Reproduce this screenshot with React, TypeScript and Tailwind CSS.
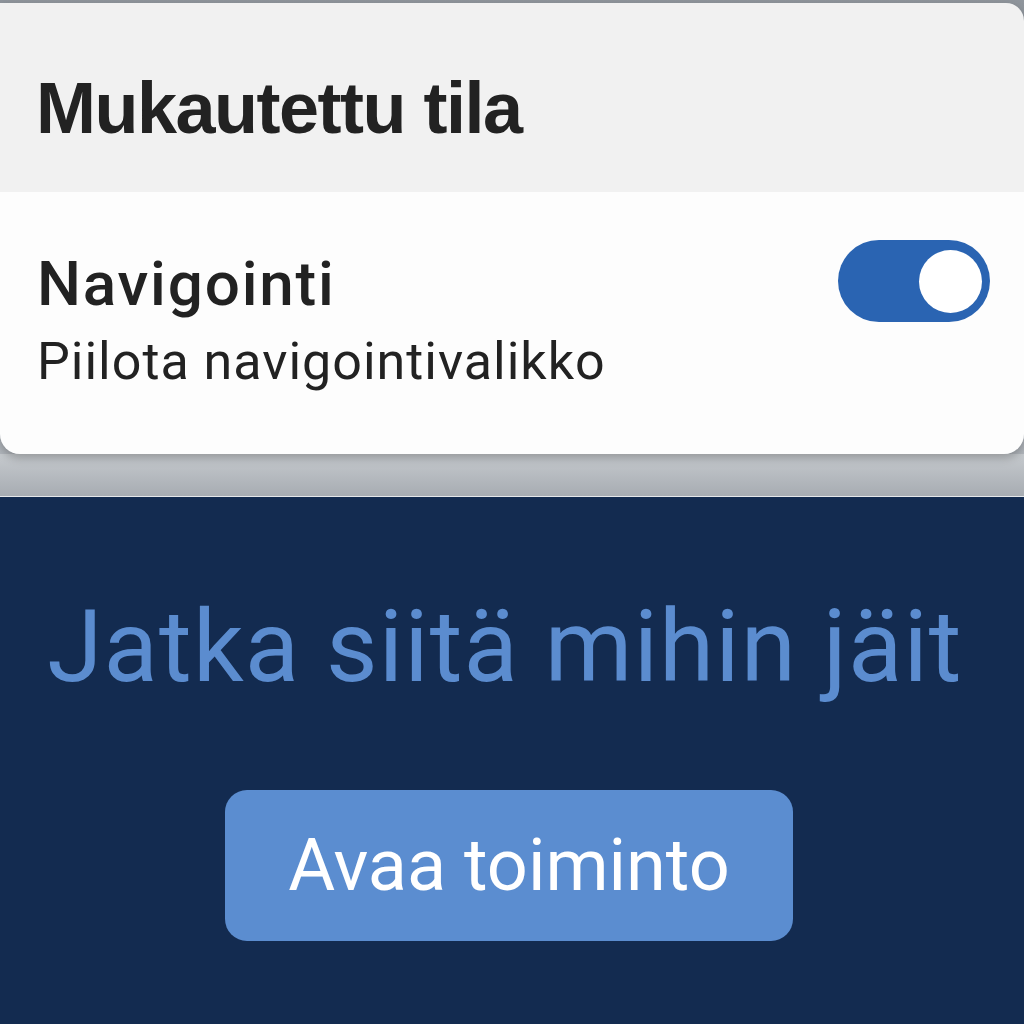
import React from "react";

export default function App() {
  return (
    <div className="w-[1024px] h-[1024px] overflow-hidden flex flex-col bg-[#132b50]" style={{ fontFamily: "Roboto, 'Liberation Sans', sans-serif" }}>
      <div className="flex flex-col bg-gradient-to-b from-[#8f959c] to-[#b4b9bf] pt-[3px]">
        <div className="relative flex flex-col rounded-tr-[18px] rounded-b-[20px] overflow-hidden shadow-[0_4px_10px_rgba(0,0,0,0.25)]">
          <div className="h-[189px] bg-[#f1f1f1] flex items-center pl-[36px] pt-[20px]">
            <h1 className="text-[72px] font-bold text-[#222222] tracking-[-1.5px] leading-none" style={{ fontFamily: "'Liberation Sans', Arial, sans-serif" }}>
              Mukautettu tila
            </h1>
          </div>
          <div className="h-[262px] bg-[#fdfdfd] flex items-start justify-between pl-[37px] pr-[34px] pt-[48px]">
            <div className="flex flex-col pt-[13px]">
              <div className="text-[62px] font-medium text-[#222222] leading-none tracking-[1.8px]">Navigointi</div>
              <div className="text-[52px] text-[#222222] leading-none mt-[21px] tracking-[1px]">Piilota navigointivalikko</div>
            </div>
            <div className="w-[152px] h-[82px] rounded-full bg-[#2a64b2] flex items-center justify-end pr-[8px] shrink-0">
              <div className="w-[63px] h-[63px] rounded-full bg-white" />
            </div>
          </div>
        </div>
        <div className="h-[43px] bg-gradient-to-b from-[#c6cace] to-[#a7acb2] border-b border-[#e5e7ea]" />
      </div>
      <div className="flex-1 flex flex-col items-center pt-[100px] pr-[14px]">
        <h2 className="text-[100px] text-[#5b8ccf] leading-none tracking-[1.1px]">Jatka siitä mihin jäit</h2>
        <button className="mt-[93px] ml-[8px] w-[568px] h-[151px] rounded-[22px] bg-[#5b8dd0] text-white text-[72px] leading-none flex items-center justify-center">
          Avaa toiminto
        </button>
      </div>
    </div>
  );
}
